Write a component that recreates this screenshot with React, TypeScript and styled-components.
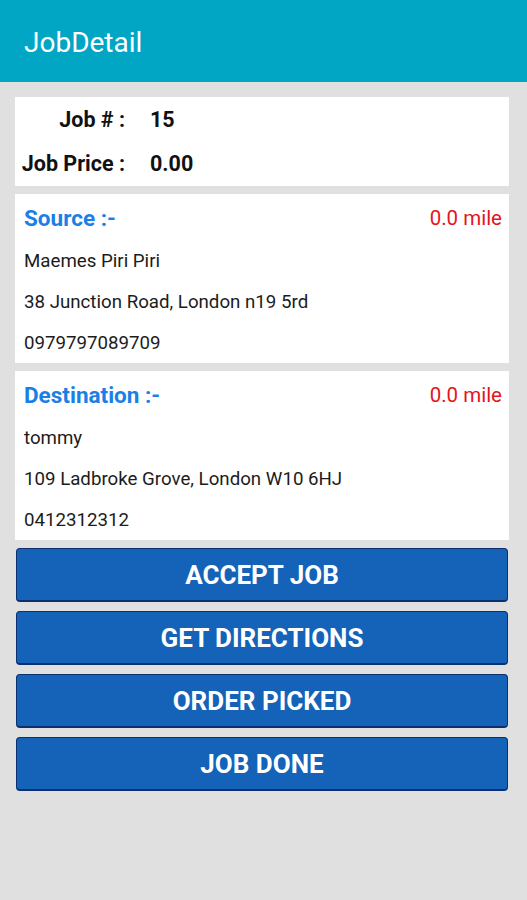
import React from "react";
import styled, { createGlobalStyle } from "styled-components";

const GlobalStyle = createGlobalStyle`
    html, body {
        margin: 0;
        padding: 0;
        background: #e0e0e0;
        font-family: Roboto, "Liberation Sans", Arial, sans-serif;
    }
`;

const Page = styled.div`
    width: 527px;
    height: 900px;
    background: #e0e0e0;
    display: flex;
    flex-direction: column;
`;

const AppBar = styled.header`
    height: 82px;
    background: #00a6c4;
    display: flex;
    align-items: center;
    padding: 2px 24px 0;
    box-sizing: border-box;
    color: #ffffff;
    font-size: 28px;
    font-weight: 400;
`;

const Content = styled.main`
    display: flex;
    flex-direction: column;
    gap: 8px;
    padding: 15px 18px 0 15px;
`;

const Card = styled.section`
    background: #ffffff;
    box-sizing: border-box;
`;

const InfoCard = styled(Card)`
    height: 89px;
    display: grid;
    grid-template-columns: 110px auto;
    grid-auto-rows: 44px;
    align-content: center;
    column-gap: 25px;
    font-size: 21.5px;
    font-weight: 700;
    color: #111111;
`;

const InfoLabel = styled.span`
    text-align: right;
    line-height: 44px;
`;

const InfoValue = styled.span`
    line-height: 44px;
`;

const AddressCard = styled(Card)`
    height: 169px;
    padding: 3px 7px 0 9px;
    display: flex;
    flex-direction: column;
`;

const AddressHead = styled.div`
    display: flex;
    justify-content: space-between;
    align-items: center;
    height: 43px;
    padding-bottom: 2px;
    box-sizing: border-box;
`;

const AddressTitle = styled.span`
    color: #1a7fe6;
    font-size: 22.5px;
    font-weight: 700;
`;

const Distance = styled.span`
    color: #e5141c;
    font-size: 20.5px;
`;

const AddressLine = styled.div`
    height: 41px;
    display: flex;
    align-items: center;
    font-size: 18.7px;
    color: #1c1c1c;
`;

const Actions = styled.div`
    display: flex;
    flex-direction: column;
    gap: 9px;
    padding: 0 1px;
`;

const ActionButton = styled.button`
    height: 54px;
    width: 100%;
    background: #1463b8;
    border: 1px solid #0c2f6e;
    border-bottom-width: 2px;
    border-radius: 4px;
    color: #ffffff;
    font-family: Roboto, "Liberation Sans", Arial, sans-serif;
    font-size: 26px;
    font-weight: 700;
    cursor: pointer;
`;

type Place = {
    title: string;
    distance: string;
    lines: string[];
};

const places: Place[] = [
    {
        title: "Source :-",
        distance: "0.0 mile",
        lines: ["Maemes Piri Piri", "38 Junction Road, London n19 5rd", "0979797089709"],
    },
    {
        title: "Destination :-",
        distance: "0.0 mile",
        lines: ["tommy", "109 Ladbroke Grove, London W10 6HJ", "0412312312"],
    },
];

const actions = ["ACCEPT JOB", "GET DIRECTIONS", "ORDER PICKED", "JOB DONE"];

const App: React.FC = () => {
    return (
        <Page>
            <GlobalStyle />
            <AppBar>JobDetail</AppBar>
            <Content>
                <InfoCard>
                    <InfoLabel>Job # :</InfoLabel>
                    <InfoValue>15</InfoValue>
                    <InfoLabel>Job Price :</InfoLabel>
                    <InfoValue>0.00</InfoValue>
                </InfoCard>
                {places.map((place) => (
                    <AddressCard key={place.title}>
                        <AddressHead>
                            <AddressTitle>{place.title}</AddressTitle>
                            <Distance>{place.distance}</Distance>
                        </AddressHead>
                        {place.lines.map((line) => (
                            <AddressLine key={line}>{line}</AddressLine>
                        ))}
                    </AddressCard>
                ))}
                <Actions>
                    {actions.map((label) => (
                        <ActionButton key={label}>{label}</ActionButton>
                    ))}
                </Actions>
            </Content>
        </Page>
    );
};

export default App;
